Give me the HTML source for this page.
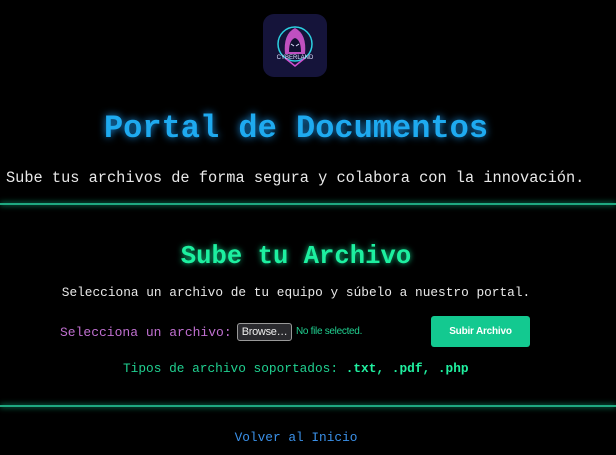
<!DOCTYPE html>
<html><head><meta charset="utf-8"><style>
html,body{margin:0;padding:0;background:#000;width:616px;height:455px;overflow:hidden;font-family:"Liberation Mono",monospace;}
.abs{position:absolute;white-space:nowrap;}
.c{left:0;width:592px;text-align:center;}
.logo{position:absolute;left:263px;top:14px;width:64px;height:63px;background:#15143a;border-radius:11px;}
h1{margin:0;font-size:32px;color:#1eaaf0;text-shadow:0 0 8px #1a8fe0;font-weight:bold;}
.line{position:absolute;left:0;width:616px;height:2px;background:#1fa880;box-shadow:0 0 6px #13c08a;}
</style></head><body>
<div class="logo">
<svg width="64" height="63" viewBox="0 0 64 63">
<circle cx="32" cy="30" r="17" fill="none" stroke="#2bd0e0" stroke-width="1.5"/>
<path d="M22 40 Q20 20 32 14 Q44 20 42 40 Z" fill="#c050c0"/>
<path d="M26 38 Q26 26 32 24 Q38 26 38 38 Z" fill="#101030"/>
<path d="M28 30 l3 2 M36 30 l-3 2" stroke="#e0e0ff" stroke-width="1"/>
<path d="M22 44 L32 52 L42 44" fill="none" stroke="#d050d0" stroke-width="1.5"/>
<text x="32" y="45" font-size="6" fill="#dfe0ff" text-anchor="middle" font-family="Liberation Sans">CYBERLAND</text>
</svg></div>
<div class="abs c" style="top:110px"><h1>Portal de Documentos</h1></div>
<div class="abs" style="top:169px;left:6px;font-size:15.3px;color:#e8e8e8">Sube tus archivos de forma segura y colabora con la innovación.</div>
<div class="line" style="top:203px"></div>
<div class="abs c" style="top:242px;font-size:25.6px;font-weight:bold;color:#1df0a0;text-shadow:0 0 6px #10c080">Sube tu Archivo</div>
<div class="abs c" style="top:285px;font-size:12.8px;color:#e8e8e8">Selecciona un archivo de tu equipo y súbelo a nuestro portal.</div>
<div class="abs" style="top:325px;left:60px;font-size:13px;color:#c070d0">Selecciona un archivo:</div>
<div class="abs" style="top:323px;left:237px;width:53px;height:16px;border:1px solid #999;border-radius:3px;background:#2a2a2e;color:#eee;font:11px 'Liberation Sans',sans-serif;line-height:16px;text-align:center;letter-spacing:-0.3px">Browse…</div>
<div class="abs" style="top:326px;left:296px;font:10px 'Liberation Sans',sans-serif;color:#20d090;letter-spacing:-0.3px">No file selected.</div>
<div class="abs" style="top:316px;left:431px;width:99px;height:31px;background:#13c990;border-radius:3px;color:#fff;font:bold 10px 'Liberation Sans',sans-serif;line-height:31px;text-align:center;letter-spacing:-0.2px">Subir Archivo</div>
<div class="abs" style="top:361px;left:123px;font-size:12.8px;color:#20d090">Tipos de archivo soportados: <b style="color:#20f0a0">.txt, .pdf, .php</b></div>
<div class="line" style="top:405px"></div>
<div class="abs c" style="top:430px;font-size:12.8px;color:#3a90e8">Volver al Inicio</div>
</body></html>
